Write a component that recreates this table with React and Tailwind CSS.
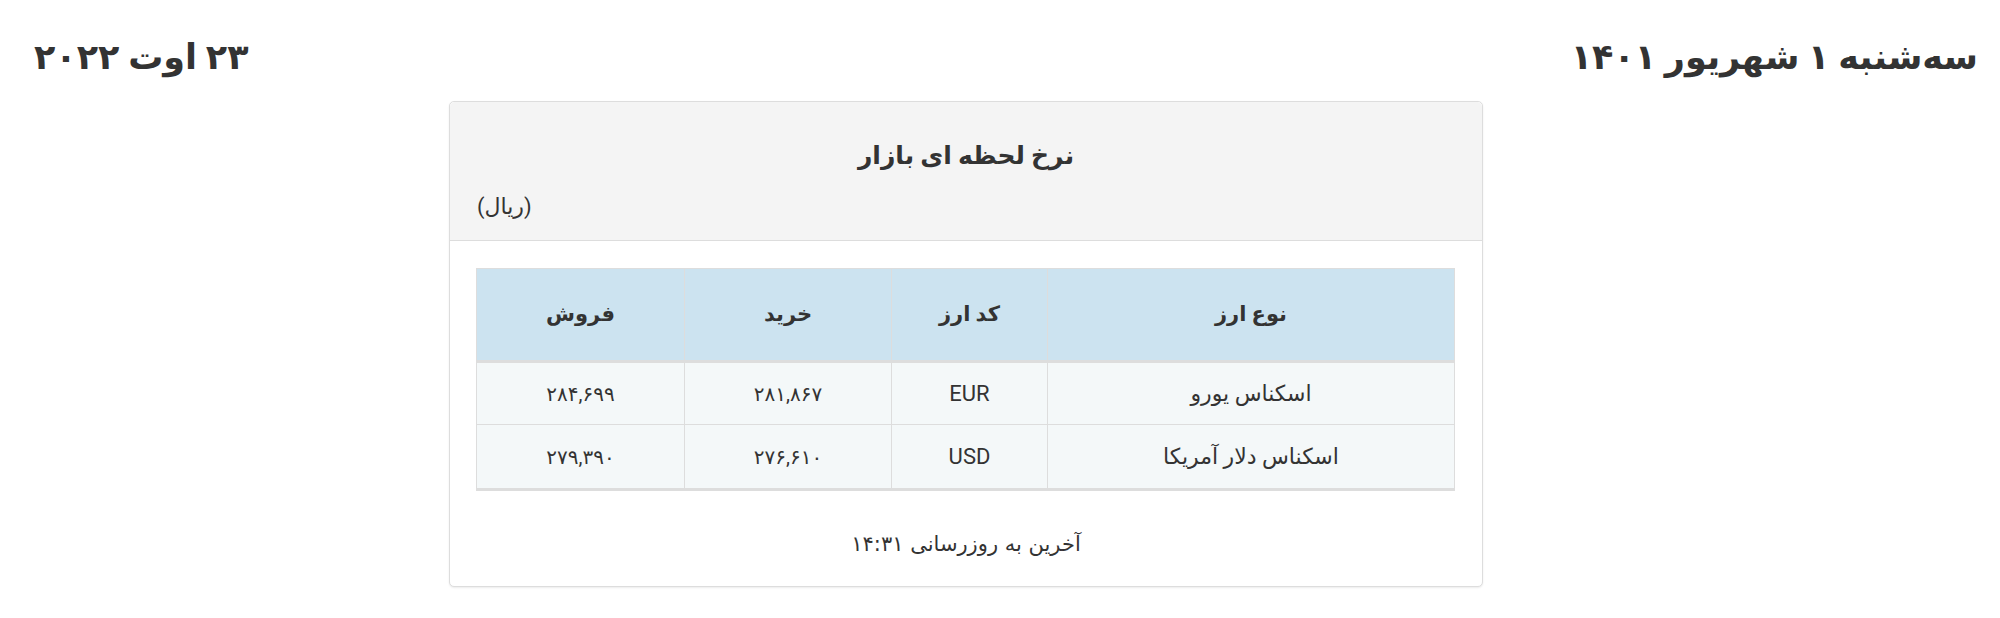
import React from "react";

const rows = [
  { name: "اسکناس یورو", code: "EUR", buy: "۲۸۱,۸۶۷", sell: "۲۸۴,۶۹۹" },
  { name: "اسکناس دلار آمریکا", code: "USD", buy: "۲۷۶,۶۱۰", sell: "۲۷۹,۳۹۰" },
];

export default function App() {
  return (
    <div
      className="w-[2000px] h-[618px] bg-white text-[#333] overflow-hidden"
      style={{ fontFamily: 'Roboto, "DejaVu Sans", sans-serif' }}
    >
      <div className="flex justify-between items-center h-[101px] pt-[14px] pl-[34px] pr-[22px]">
        <div dir="rtl" className="text-[35px] font-bold leading-none">۲۳ اوت ۲۰۲۲</div>
        <div dir="rtl" className="text-[35px] font-bold leading-none">سه‌شنبه ۱ شهریور ۱۴۰۱</div>
      </div>

      <div
        dir="rtl"
        className="ml-[449px] w-[1034px] border border-[#ddd] rounded-[5px] shadow-[0_1px_2px_rgba(0,0,0,0.08)] bg-white"
      >
        <div className="h-[139px] bg-[#f4f4f4] border-b border-[#ddd] rounded-t-[5px] flex flex-col px-[27px] pt-[38px]">
          <div className="text-center text-[25px] font-bold leading-[32px]">نرخ لحظه ای بازار</div>
          <div className="text-left text-[22px] leading-[28px] mt-[21px]">(ریال)</div>
        </div>

        <div className="px-[27px] pt-[27px]">
          <table className="w-[978px] border-collapse text-[22px] table-fixed">
            <colgroup>
              <col className="w-[407px]" />
              <col className="w-[156px]" />
              <col className="w-[207px]" />
              <col className="w-[208px]" />
            </colgroup>
            <thead>
              <tr className="bg-[#cce3f0]">
                <th className="h-[93px] border border-[#ddd] border-b-[3px] text-[21px] font-bold text-center">نوع ارز</th>
                <th className="h-[93px] border border-[#ddd] border-b-[3px] text-[21px] font-bold text-center">کد ارز</th>
                <th className="h-[93px] border border-[#ddd] border-b-[3px] text-[21px] font-bold text-center">خرید</th>
                <th className="h-[93px] border border-[#ddd] border-b-[3px] text-[21px] font-bold text-center">فروش</th>
              </tr>
            </thead>
            <tbody>
              {rows.map((r, i) => (
                <tr key={r.code} className="bg-[#f4f8f9]">
                  <td className={"border border-[#ddd] text-center " + (i === 1 ? "h-[65px] border-b-[3px]" : "h-[63px]")}>{r.name}</td>
                  <td className={"border border-[#ddd] text-center " + (i === 1 ? "h-[65px] border-b-[3px]" : "h-[63px]")}>{r.code}</td>
                  <td className={"border border-[#ddd] text-center text-[20px] " + (i === 1 ? "h-[65px] border-b-[3px]" : "h-[63px]")}>{r.buy}</td>
                  <td className={"border border-[#ddd] text-center text-[20px] " + (i === 1 ? "h-[65px] border-b-[3px]" : "h-[63px]")}>{r.sell}</td>
                </tr>
              ))}
            </tbody>
          </table>
        </div>

        <div
          className="text-center text-[21px] leading-[28px] pt-[39px] pb-[28px]"
          style={{ fontFamily: '"DejaVu Sans", sans-serif' }}
        >
          آخرین به روزرسانی ۱۴:۳۱
        </div>
      </div>
    </div>
  );
}
